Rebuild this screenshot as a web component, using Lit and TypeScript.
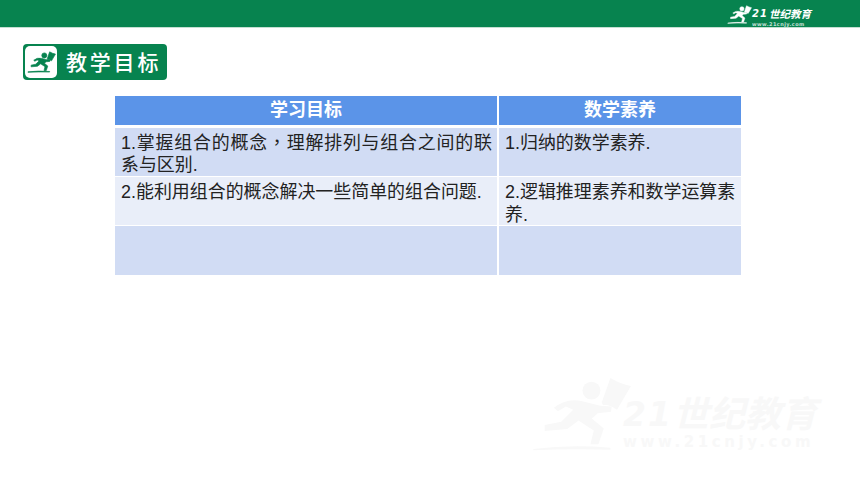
import { LitElement, html, css, svg } from "lit";
import { customElement } from "lit/decorators.js";

const runner = svg`
  <circle cx="205" cy="52" r="27"/>
  <path d="M236 88 L262 14 Q292 32 324 38 L282 110 Q258 92 240 96 Z"/>
  <path d="M92 104 Q130 72 178 84 L232 98 L266 100 L264 116 L224 120 L206 136 L242 166 L226 214 L202 214 L212 172 L166 142 L132 168 L64 174 L64 156 L114 146 L150 110 L128 100 L104 114 Z"/>
  <path d="M30 228 Q140 214 262 224 L262 230 Q140 226 30 232 Z"/>`;

@customElement("app-root")
export class AppRoot extends LitElement {
  static styles = css`
    :host { display: block; width: 860px; height: 484px; background: #fff; position: relative; overflow: hidden;
      font-family: "Liberation Sans", "Noto Sans CJK SC", sans-serif; }
    .topbar { background: #07834f; border-bottom: 1px solid #c4dfd2; display: flex; justify-content: flex-end; align-items: flex-start; padding: 5px 49px 0 0; box-sizing: border-box; height: 28px; }
    .brand { display: flex; align-items: flex-start; color: #fff; }
    .brand svg { width: 25px; height: 19px; fill: #fff; stroke: #fff; stroke-width: 6; display: block; }
    .brand-text { display: flex; flex-direction: column; align-items: flex-start; margin-top: 4px; }
    .brand-name { display: flex; align-items: center; height: 10px; font-weight: 700; font-style: italic; white-space: nowrap; }
    .brand-num { font-family: "DejaVu Sans", sans-serif; font-size: 10px; line-height: 10px; letter-spacing: 1px; margin-right: 1px; }
    .brand-cn { font-size: 10.5px; line-height: 10px; }
    .brand-url { font-family: "DejaVu Sans", sans-serif; font-size: 5px; line-height: 6px; margin-top: 2px; font-weight: 700; white-space: nowrap; letter-spacing: .4px; opacity: .75; }
    main { padding: 16px 0 0 23px; }
    .badge { width: 144px; height: 36px; box-sizing: border-box; background: #07834f; border-radius: 4px; display: flex; align-items: center; padding: 2px 3px 2px 2px; gap: 9px; }
    .badge-icon { width: 32px; height: 32px; background: #fff; border-radius: 5px; display: flex; align-items: center; justify-content: center; }
    .badge-icon svg { width: 29px; height: 24px; fill: #07834f; stroke: #07834f; stroke-width: 7; }
    .badge-title { color: #fff; font-size: 21px; font-weight: 500; letter-spacing: 2.8px; white-space: nowrap; line-height: 1; }
    .table { margin: 16px 0 0 92px; width: 626px; display: grid; grid-template-columns: 382px 242px; column-gap: 2px; grid-template-rows: 29px 50.5px 49.5px 49.5px; }
    .cell { padding: 4px 5px 0 6px; font-size: 17.95px; line-height: 22.5px; color: #222; text-align: left; }
    .justify { text-align: justify; font-family: "Liberation Sans", "Noto Sans CJK TC", sans-serif; }
    .head { background: #5b94e8; color: #fff; font-weight: 700; font-size: 18px; text-align: center; padding: 0; line-height: 29px; }
    .dark { background: #d1dcf4; }
    .light { background: #e9eef9; }
    .r1 { margin-top: 2.5px; }
    .r2 { margin-top: 1.5px; }
    .r3 { margin-top: 1px; }
    .watermark { position: absolute; left: 530px; top: 375px; display: flex; align-items: flex-start; color: #f8f8f8; }
    .watermark svg { width: 103px; height: 78px; fill: #f8f8f8; }
    .wm-text { display: flex; flex-direction: column; margin: 22px 0 0 -10px; }
    .wm-name { display: flex; align-items: center; height: 36px; font-weight: 700; font-style: italic; white-space: nowrap; }
    .wm-num { font-family: "DejaVu Sans", sans-serif; font-size: 33px; line-height: 36px; letter-spacing: 2px; }
    .wm-cn { font-size: 36px; line-height: 36px; }
    .wm-url { font-family: "DejaVu Sans", sans-serif; font-size: 15px; line-height: 17px; margin-top: 1px; font-weight: 700; letter-spacing: 3.6px; white-space: nowrap; }
  `;

  render() {
    return html`
      <header class="topbar">
        <div class="brand">
          <svg viewBox="20 5 310 235">${runner}</svg>
          <div class="brand-text">
            <span class="brand-name"><span class="brand-num">21</span><span class="brand-cn">世纪教育</span></span>
            <span class="brand-url">www.21cnjy.com</span>
          </div>
        </div>
      </header>
      <main>
        <div class="badge">
          <div class="badge-icon"><svg viewBox="20 5 310 235">${runner}</svg></div>
          <span class="badge-title">教学目标</span>
        </div>
        <div class="table">
          <div class="cell head">学习目标</div>
          <div class="cell head">数学素养</div>
          <div class="cell dark r1 justify">1.掌握组合的概念，理解排列与组合之间的联系与区别.</div>
          <div class="cell dark r1">1.归纳的数学素养.</div>
          <div class="cell light r2">2.能利用组合的概念解决一些简单的组合问题.</div>
          <div class="cell light r2">2.逻辑推理素养和数学运算素养.</div>
          <div class="cell dark r3"></div>
          <div class="cell dark r3"></div>
        </div>
      </main>
      <div class="watermark">
        <svg viewBox="20 5 310 235">${runner}</svg>
        <div class="wm-text">
          <span class="wm-name"><span class="wm-num">21</span><span class="wm-cn">世纪教育</span></span>
          <span class="wm-url">www.21cnjy.com</span>
        </div>
      </div>
    `;
  }
}
